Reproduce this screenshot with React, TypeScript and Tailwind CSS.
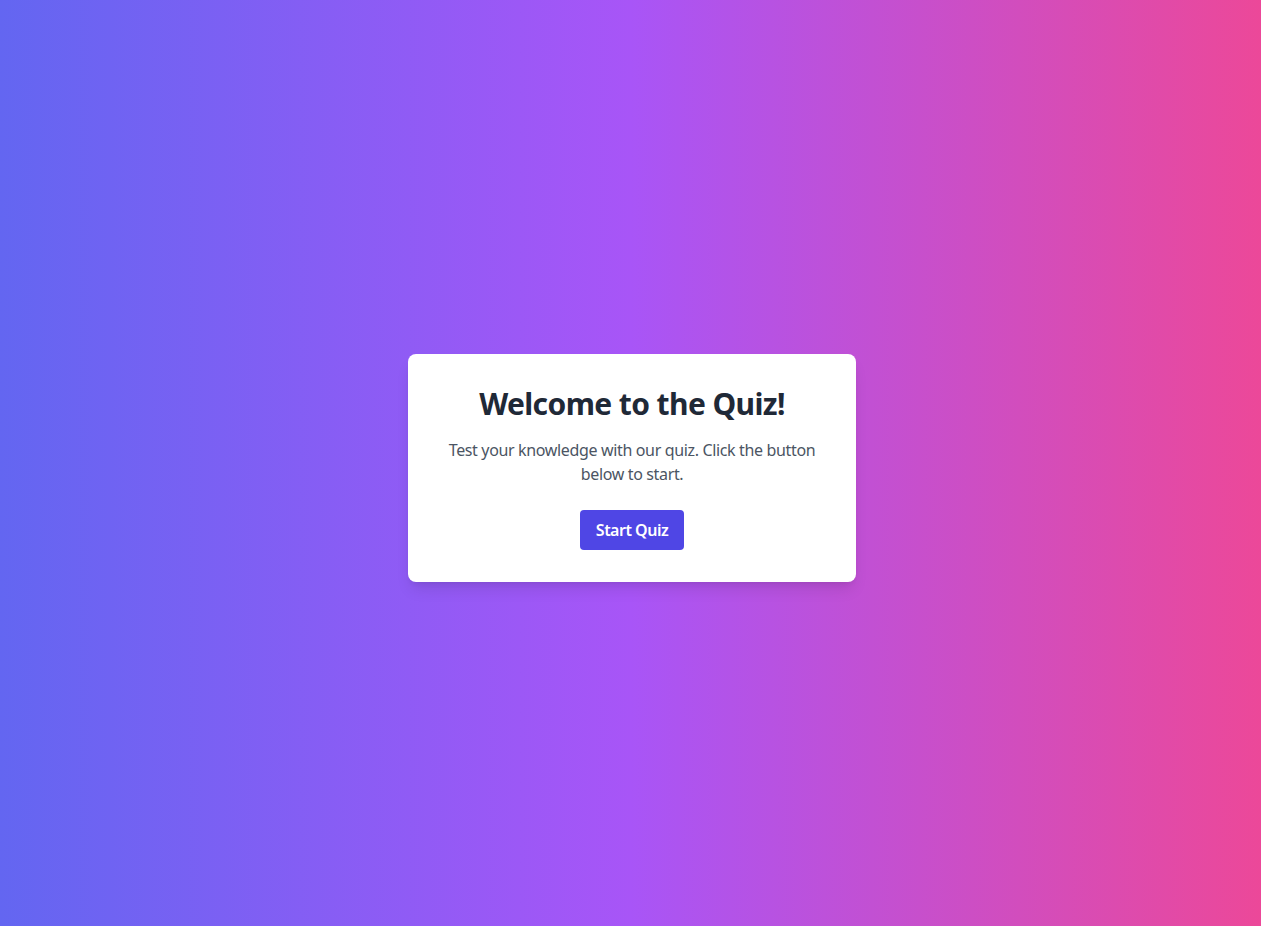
export default function App() {
  return (
    <div className="min-h-screen flex items-center justify-center pt-[9px] pl-[3px] bg-[linear-gradient(to_right,#6366f1,#a855f7,#ec4899)] font-['Noto_Sans',sans-serif]">
      <div className="bg-white rounded-lg shadow-lg p-8 w-full max-w-md text-center">
        <h1 className="text-3xl font-bold text-[#1f2937] mb-4 tracking-[-0.6px]">Welcome to the Quiz!</h1>
        <p className="text-base text-[#4b5563] mb-6 tracking-[-0.35px]">
          Test your knowledge with our quiz. Click the button below to start.
        </p>
        <button className="bg-[#4f46e5] text-white font-semibold px-4 py-2 rounded tracking-[-0.5px]">
          Start Quiz
        </button>
      </div>
    </div>
  );
}
